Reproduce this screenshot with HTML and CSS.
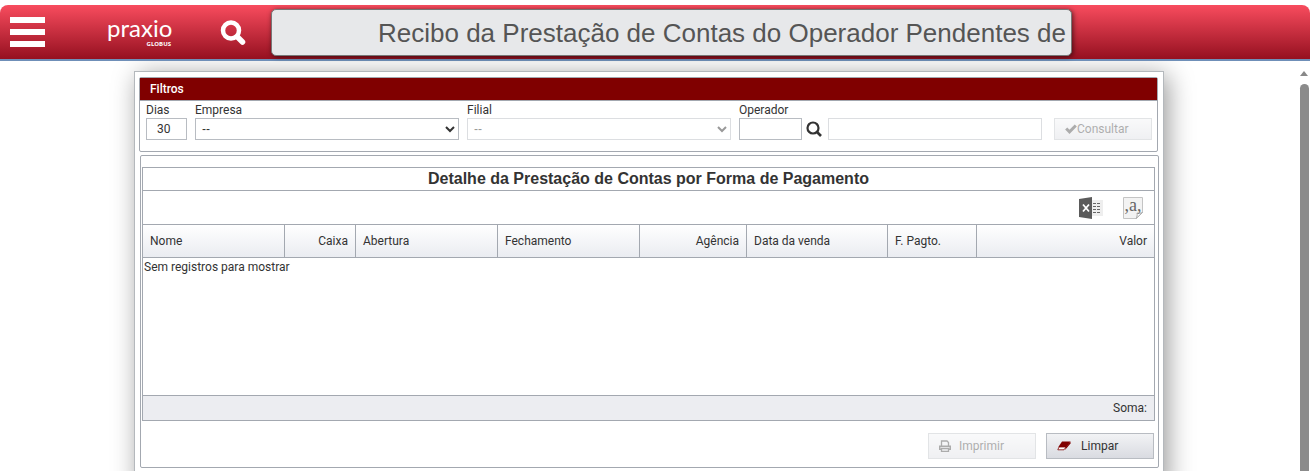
FILE: index.html
```html
<!DOCTYPE html>
<html lang="pt-BR">
<head>
    <meta charset="UTF-8">
    <meta name="viewport" content="width=device-width, initial-scale=1.0">
    <title>Praxio Globus</title>
    <link rel="stylesheet" href="styles.css">
</head>
<body>
    <header class="topbar">
        <button class="menu-button" type="button" aria-label="Menu">
            <span class="menu-line"></span>
            <span class="menu-line"></span>
            <span class="menu-line"></span>
        </button>
        <a class="logo" href="#">
            <span class="logo-name">praxio</span>
            <span class="logo-product">GLOBUS</span>
        </a>
        <button class="search-button" type="button" aria-label="Pesquisar">
            <svg width="26" height="26" viewBox="0 0 26 26" fill="none" stroke="#fff">
                <circle cx="11" cy="11.500" r="8" stroke-width="4.500"/>
                <path d="M17.500 18l5 5" stroke-width="5.500" stroke-linecap="round"/>
            </svg>
        </button>
        <h1 class="page-title">Recibo da Prestação de Contas do Operador Pendentes de</h1>
    </header>

    <div class="workspace">
        <main class="panel">
            <section class="filters">
                <h2 class="filters-title">Filtros</h2>
                <form class="filters-form">
                    <div class="field field-days">
                        <label for="dias">Dias</label>
                        <input type="text" id="dias" value="30">
                    </div>
                    <div class="field field-select">
                        <label for="empresa">Empresa</label>
                        <select id="empresa">
                            <option>--</option>
                        </select>
                    </div>
                    <div class="field field-select">
                        <label for="filial">Filial</label>
                        <select id="filial" disabled>
                            <option>--</option>
                        </select>
                    </div>
                    <div class="field field-operator">
                        <label for="operador">Operador</label>
                        <input type="text" id="operador">
                    </div>
                    <button class="lookup-button" type="button" aria-label="Buscar operador">
                        <svg width="16" height="16" viewBox="0 0 16 16" fill="none" stroke="#333">
                            <circle cx="7" cy="7" r="5.500" stroke-width="2.200"/>
                            <path d="M10.500 10.500l4.500 4.500" stroke-width="2.600"/>
                        </svg>
                    </button>
                    <div class="field field-name">
                        <input type="text" aria-label="Nome do operador" disabled>
                    </div>
                    <button class="btn btn-query" type="button" disabled>
                        <svg width="12" height="10" viewBox="0 0 12 10" fill="none" stroke="#333" stroke-width="3">
                            <path d="M1.200 4.500l3.300 3.300L10.800 1.500"/>
                        </svg>
                        Consultar
                    </button>
                </form>
            </section>

            <section class="details">
                <div class="grid">
                    <h2 class="grid-title">Detalhe da Prestação de Contas por Forma de Pagamento</h2>
                    <div class="grid-tools">
                        <button class="tool-button" type="button" aria-label="Exportar para Excel">
                            <svg width="24" height="24" viewBox="0 0 24 24">
                                <rect x="12" y="4" width="12" height="16" fill="#eee"/>
                                <path d="M0 3L13 1v22L0 21z" fill="#5b5b5b"/>
                                <path d="M4 8.500l6 7M10 8.500l-6 7" stroke="#fff" stroke-width="1.800"/>
                                <path d="M14 7.500h3M18 7.500h3M14 10.500h3M18 10.500h3M14 13.500h3M18 13.500h3M14 16.500h3M18 16.500h3" stroke="#666"/>
                            </svg>
                        </button>
                        <button class="tool-button" type="button" aria-label="Exportar para CSV">
                            <svg width="20" height="24" viewBox="0 0 20 24">
                                <path d="M.5 1.500h19v15l-6 6H.5z" fill="#f3f3f3" stroke="#c4c4c4"/>
                                <path d="M19.500 16.500c-2 1-4 1-5.500.5.500 2 0 4-1 5.500z" fill="#fff" stroke="#aaa"/>
                                <text class="csv-text" x="10" y="15" text-anchor="middle">,a,</text>
                            </svg>
                        </button>
                    </div>
                    <table class="grid-table">
                        <colgroup>
                            <col class="col-medium">
                            <col class="col-box">
                            <col class="col-medium">
                            <col class="col-medium">
                            <col class="col-agency">
                            <col class="col-sale">
                            <col class="col-payment">
                            <col>
                        </colgroup>
                        <thead>
                            <tr>
                                <th>Nome</th>
                                <th class="right">Caixa</th>
                                <th>Abertura</th>
                                <th>Fechamento</th>
                                <th class="right">Agência</th>
                                <th>Data da venda</th>
                                <th>F. Pagto.</th>
                                <th class="right">Valor</th>
                            </tr>
                        </thead>
                        <tbody>
                            <tr>
                                <td class="empty" colspan="8">Sem registros para mostrar</td>
                            </tr>
                        </tbody>
                        <tfoot>
                            <tr>
                                <td class="right" colspan="8">Soma:</td>
                            </tr>
                        </tfoot>
                    </table>
                </div>
                <div class="actions">
                    <button class="btn btn-action btn-print" type="button" disabled>
                        <svg width="12" height="12" viewBox="0 0 12 12" fill="none" stroke="#333" stroke-width="1.300">
                            <path d="M2.500 6V1h5.500l1.500 1.500V6"/>
                            <path d="M2.500 9.300H.7V6.300h10.600v3H9.500" stroke-width="1.600"/>
                            <path d="M2.500 8.500h7v2.800h-7z"/>
                        </svg>
                        <span class="btn-text">Imprimir</span>
                    </button>
                    <button class="btn btn-action" type="button">
                        <svg width="14" height="10" viewBox="0 0 14 10">
                            <path d="M5 .5h8.500L9.500 6H1.300z" fill="#800000"/>
                            <path d="M2 6h7L7 8.800H.8z" fill="#fff" stroke="#800000" stroke-width=".8"/>
                            <path d="M9 6l4.500-5.500v2L8 9z" fill="#800000"/>
                        </svg>
                        <span class="btn-text">Limpar</span>
                    </button>
                </div>
            </section>
        </main>
        <div class="scrollbar">
            <span class="scroll-arrow"></span>
            <span class="scroll-thumb"></span>
        </div>
    </div>
</body>
</html>
```
FILE: styles.css
```css
* {
    box-sizing: border-box;
}

body {
    display: flex;
    flex-direction: column;
    height: 100vh;
    margin: 0;
    padding-top: 5px;
    overflow: hidden;
    background-color: #fff;
    color: #333;
    font-family: Roboto, Arial, sans-serif;
    font-size: 12px;
}

h1, h2 {
    margin: 0;
}

button, input, select {
    color: #333;
    font-family: inherit;
    font-size: 12px;
}

button {
    padding: 0;
    border: none;
    background: none;
    cursor: pointer;
}

svg {
    display: block;
    flex: none;
}

/* Top bar */

.topbar {
    display: flex;
    flex: none;
    align-items: center;
    height: 56px;
    padding-left: 10px;
    border-bottom: 2px solid #6f8fb8;
    border-radius: 8px 8px 0 0;
    background: linear-gradient(#f84c5e, #951020);
}

.menu-button {
    display: flex;
    flex-direction: column;
    gap: 6px;
    width: 35px;
}

.menu-line {
    height: 6px;
    background-color: #fff;
}

.logo {
    display: flex;
    flex-direction: column;
    width: 64px;
    margin-left: 62px;
    color: #fff;
    text-decoration: none;
}

.logo-name {
    font-family: Lato, sans-serif;
    font-size: 24px;
    line-height: 24px;
}

.logo-product {
    font-family: "Open Sans", sans-serif;
    font-size: 6px;
    font-weight: bold;
    line-height: 8px;
    text-align: right;
}

.search-button {
    margin-left: 49px;
}

.page-title {
    width: 801px;
    margin-left: 25px;
    padding: 2px 5px 0;
    overflow: hidden;
    border: 1px solid #777;
    border-radius: 5px;
    background-color: #e7e8ea;
    box-shadow: 1px 1px 5px rgba(0, 0, 0, 0.6);
    color: #555;
    font-family: "Liberation Sans", Arial, sans-serif;
    font-size: 26px;
    font-weight: normal;
    line-height: 43px;
    text-align: right;
    white-space: nowrap;
}

/* Content */

.workspace {
    display: flex;
    flex: 1;
    min-height: 0;
    padding-top: 10px;
    overflow: hidden;
}

.panel {
    width: 100%;
    max-width: 1030px;
    height: max-content;
    margin: 0 auto;
    padding: 5px 4px 20px;
    border: 1px solid #b4b8bc;
    background-color: #fff;
    box-shadow: 4px 4px 24px rgba(0, 0, 0, 0.4);
}

.filters,
.details {
    border: 1px solid #a3a8b0;
    border-radius: 2px;
}

.filters {
    margin-right: 1px;
}

.filters-title {
    padding-left: 10px;
    border-bottom: 1px solid #a3a8b0;
    background-color: #800000;
    color: #fff;
    font-size: 12px;
    font-weight: 500;
    line-height: 22px;
}

.filters-form {
    display: flex;
    align-items: flex-end;
    gap: 8px;
    padding: 1px 5px 11px 6px;
}

.field label {
    display: block;
    line-height: 16px;
}

.field input,
.field select {
    display: block;
    width: 100%;
    height: 22px;
    border: 1px solid #b8bcc2;
    border-radius: 0;
    background-color: #fff;
}

.field input {
    padding: 0 10px;
}

.field select {
    padding: 0 2px;
    font-family: "Liberation Sans", Arial, sans-serif;
}

.field input:disabled,
.field select:disabled {
    border-color: #dcdee1;
    color: #999;
    opacity: 1;
}

.field-days {
    width: 41px;
}

.field-select {
    flex: 1;
}

.field-operator {
    width: 63px;
}

.lookup-button {
    margin: 0 -2px 3px -4px;
}

.field-name {
    width: 214px;
}

.btn {
    display: flex;
    align-items: center;
    border: 1px solid #b8bcc2;
    background: linear-gradient(#f2f3f5, #d9dbe1);
}

.btn:disabled {
    color: #333;
    cursor: default;
    opacity: 0.4;
}

.btn-query {
    width: 98px;
    height: 22px;
    margin-left: 4px;
    padding-left: 10px;
}

.details {
    margin: 3px 0 0 1px;
    padding: 11px 3px 8px 1px;
}

/* Grid */

.grid {
    border: 1px solid #a3a8b0;
}

.grid-title {
    font-family: "Liberation Sans", Arial, sans-serif;
    font-size: 16px;
    line-height: 22px;
    text-align: center;
}

.grid-tools {
    display: flex;
    align-items: center;
    justify-content: flex-end;
    gap: 20px;
    height: 34px;
    padding-right: 11px;
    border-top: 1px solid #a3a8b0;
}

.csv-text {
    fill: #666;
    font-family: "Liberation Serif", serif;
    font-size: 18px;
}

.grid-table {
    width: 100%;
    border-collapse: separate;
    border-spacing: 0;
    table-layout: fixed;
}

.col-medium {
    width: 142px;
}

.col-box {
    width: 71px;
}

.col-agency {
    width: 107px;
}

.col-sale {
    width: 141px;
}

.col-payment {
    width: 89px;
}

.grid-table th {
    height: 34px;
    padding: 0 7px;
    border: 1px solid #a3a8b0;
    border-width: 1px 1px 1px 0;
    background: linear-gradient(#fff, #eaecf1);
    font-weight: normal;
    text-align: left;
}

.grid-table th:last-child {
    border-right: none;
}

.grid-table td {
    padding: 0 7px;
}

.grid-table .empty {
    height: 137px;
    padding: 2px 1px;
    vertical-align: top;
}

.grid-table tfoot td {
    height: 25px;
    border-top: 1px solid #a3a8b0;
    background-color: #ecedf1;
}

.grid-table .right {
    text-align: right;
}

.actions {
    display: flex;
    justify-content: flex-end;
    gap: 10px;
    padding: 12px 1px 0 0;
}

.btn-action {
    gap: 10px;
    width: 108px;
    height: 26px;
    padding-left: 10px;
}

.btn-print {
    gap: 8px;
}

.btn-print svg {
    width: 12px;
}

/* Scrollbar */

.scrollbar {
    display: flex;
    flex: none;
    flex-direction: column;
    align-items: center;
    gap: 8px;
    width: 12px;
}

.scroll-arrow {
    border: 4px solid transparent;
    border-top: none;
    border-bottom: 5px solid #888;
}

.scroll-thumb {
    flex: 1;
    width: 9px;
    border-radius: 5px 5px 0 0;
    background-color: #8b8b8b;
}
```
